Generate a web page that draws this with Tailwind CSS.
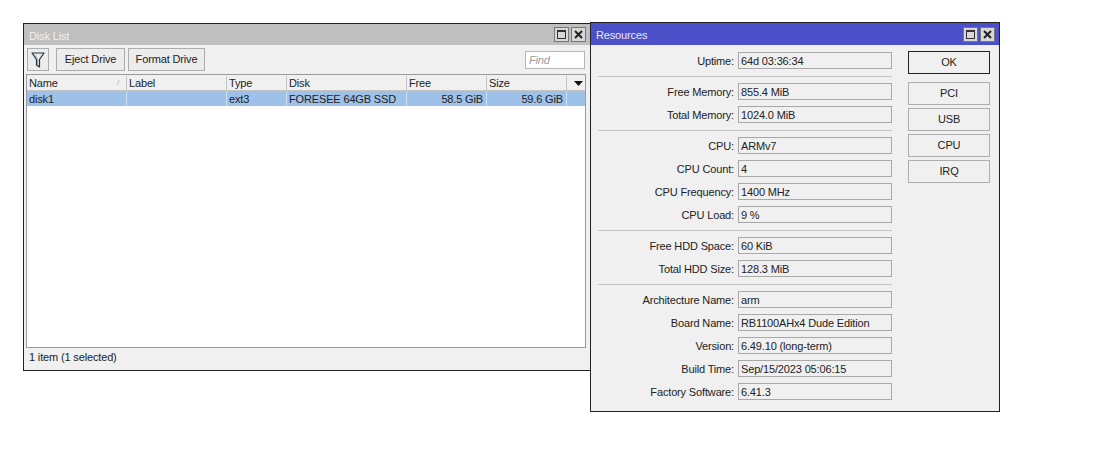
<!DOCTYPE html>
<html lang="en">
<head>
<meta charset="UTF-8">
<title>Disk List / Resources</title>
<script src="https://cdn.jsdelivr.net/npm/@tailwindcss/browser@4"></script>
</head>
<body class="relative w-[1109px] h-[451px] overflow-hidden bg-white font-['Liberation_Sans',sans-serif] text-[11px] tracking-[-0.15px] leading-[14px] text-[#222]">

<!-- Disk List window -->
<div class="absolute left-[23px] top-[23px] w-[568px] h-[348px] border border-[#222] bg-[#f0f0f0] flex flex-col">
  <div class="h-[21px] bg-[#bfbfbf] flex items-center pl-[5px] pr-[3px] text-[#f0f0f0]">
    <span class="flex-1 pt-[2px]">Disk List</span>
    <div class="flex gap-[2px] mr-[1px]">
      <div class="w-[15px] h-[15px] bg-[#d8d8d8] border border-[#777] flex items-center justify-center"><div class="w-[9px] h-[9px] border border-[#333] border-t-2"></div></div>
      <div class="w-[15px] h-[15px] bg-[#d8d8d8] border border-[#777] flex items-center justify-center">
        <svg width="9" height="9" viewBox="0 0 9 9"><path d="M1 1l7 7M8 1l-7 7" stroke="#222" stroke-width="2"/></svg>
      </div>
    </div>
  </div>
  <div class="h-[29px] flex items-center pl-[3px] pr-[5px] gap-[3px]">
    <div class="w-[22px] h-[23px] bg-[#ececec] border border-[#adadad] flex items-center justify-center">
      <svg width="14" height="16" viewBox="0 0 14 16" fill="none"><path d="M1 1h12L8.5 7.5V15L5.5 13V7.5z" stroke="#24303c" stroke-width="1.2" stroke-linejoin="round"/><path d="M3.5 2.5l3.2 5v5" stroke="#7fa6c8" stroke-width="1"/></svg>
    </div>
    <div class="ml-[4px] w-[69px] h-[23px] pb-[2px] bg-[#ececec] border border-[#adadad] flex items-center justify-center">Eject Drive</div>
    <div class="w-[77px] h-[23px] pb-[2px] bg-[#ececec] border border-[#adadad] flex items-center justify-center">Format Drive</div>
    <div class="ml-auto w-[60px] h-[18px] bg-white border border-[#b5b5b5] pl-[3px] italic text-[#9a9a9a] flex items-center">Find</div>
  </div>
  <div class="flex-1 ml-[2px] mr-[4px] border border-[#9a9a9a] bg-white flex flex-col">
    <div class="h-[16px] pt-[1px] flex bg-[#f0f0f0] border-b border-[#c4c4c4]">
      <div class="w-[100px] pl-[2px] border-r border-[#c4c4c4] flex items-center justify-between pr-[7px]">Name<span class="text-[8px] text-[#aaa]">/</span></div>
      <div class="w-[100px] pl-[2px] border-r border-[#c4c4c4] flex items-center">Label</div>
      <div class="w-[60px] pl-[2px] border-r border-[#c4c4c4] flex items-center">Type</div>
      <div class="w-[120px] pl-[2px] border-r border-[#c4c4c4] flex items-center">Disk</div>
      <div class="w-[80px] pl-[2px] border-r border-[#c4c4c4] flex items-center">Free</div>
      <div class="w-[80px] pl-[2px] border-r border-[#c4c4c4] flex items-center">Size</div>
      <div class="flex-1 flex items-center justify-end pr-[2px]">
        <svg width="9" height="5" viewBox="0 0 9 5"><path d="M0 0h9L4.5 5z" fill="#111"/></svg>
      </div>
    </div>
    <div class="h-[15px] flex bg-[#9dc1e8]">
      <div class="w-[100px] pl-[2px] border-r border-[#cfe0f3] flex items-center">disk1</div>
      <div class="w-[100px] pl-[2px] border-r border-[#cfe0f3]"></div>
      <div class="w-[60px] pl-[2px] border-r border-[#cfe0f3] flex items-center">ext3</div>
      <div class="w-[120px] pl-[2px] border-r border-[#cfe0f3] flex items-center whitespace-nowrap">FORESEE 64GB SSD</div>
      <div class="w-[80px] pr-[3px] border-r border-[#cfe0f3] flex items-center justify-end">58.5 GiB</div>
      <div class="w-[80px] pr-[3px] border-r border-[#cfe0f3] flex items-center justify-end">59.6 GiB</div>
    </div>
  </div>
  <div class="h-[22px] pl-[5px] pb-[4px] flex items-center">1 item (1 selected)</div>
</div>

<!-- Resources window -->
<div class="absolute left-[590px] top-[22px] w-[410px] h-[390px] border border-[#222] bg-[#f0f0f0] flex flex-col">
  <div class="h-[22px] bg-[#4c50c8] flex items-center pl-[5px] pr-[4px] text-[#e8e8f8]">
    <span class="flex-1 pt-[2px]">Resources</span>
    <div class="flex gap-[2px]">
      <div class="w-[15px] h-[15px] bg-[#d8d8d8] border border-[#777] flex items-center justify-center"><div class="w-[9px] h-[9px] border border-[#333] border-t-2"></div></div>
      <div class="w-[15px] h-[15px] bg-[#d8d8d8] border border-[#777] flex items-center justify-center">
        <svg width="9" height="9" viewBox="0 0 9 9"><path d="M1 1l7 7M8 1l-7 7" stroke="#222" stroke-width="2"/></svg>
      </div>
    </div>
  </div>
  <div class="flex-1 flex">
    <div class="w-[301px] pl-[7px] pt-[7px] flex flex-col">
      <div class="flex items-center h-[17px]"><span class="w-[136px] text-right">Uptime:</span><div class="ml-[4px] w-[154px] h-[17px] pl-[2px] border border-[#a8a8a8] flex items-center">64d 03:36:34</div></div>
      <div class="h-px bg-[#c4c4c4] mt-[7px] mb-[6px] w-[294px]"></div>
      <div class="flex flex-col gap-[6px]">
        <div class="flex items-center h-[17px]"><span class="w-[136px] text-right">Free Memory:</span><div class="ml-[4px] w-[154px] h-[17px] pl-[2px] border border-[#a8a8a8] flex items-center">855.4 MiB</div></div>
        <div class="flex items-center h-[17px]"><span class="w-[136px] text-right">Total Memory:</span><div class="ml-[4px] w-[154px] h-[17px] pl-[2px] border border-[#a8a8a8] flex items-center">1024.0 MiB</div></div>
      </div>
      <div class="h-px bg-[#c4c4c4] mt-[7px] mb-[6px] w-[294px]"></div>
      <div class="flex flex-col gap-[6px]">
        <div class="flex items-center h-[17px]"><span class="w-[136px] text-right">CPU:</span><div class="ml-[4px] w-[154px] h-[17px] pl-[2px] border border-[#a8a8a8] flex items-center">ARMv7</div></div>
        <div class="flex items-center h-[17px]"><span class="w-[136px] text-right">CPU Count:</span><div class="ml-[4px] w-[154px] h-[17px] pl-[2px] border border-[#a8a8a8] flex items-center">4</div></div>
        <div class="flex items-center h-[17px]"><span class="w-[136px] text-right">CPU Frequency:</span><div class="ml-[4px] w-[154px] h-[17px] pl-[2px] border border-[#a8a8a8] flex items-center">1400 MHz</div></div>
        <div class="flex items-center h-[17px]"><span class="w-[136px] text-right">CPU Load:</span><div class="ml-[4px] w-[154px] h-[17px] pl-[2px] border border-[#a8a8a8] flex items-center">9 %</div></div>
      </div>
      <div class="h-px bg-[#c4c4c4] mt-[7px] mb-[6px] w-[294px]"></div>
      <div class="flex flex-col gap-[6px]">
        <div class="flex items-center h-[17px]"><span class="w-[136px] text-right">Free HDD Space:</span><div class="ml-[4px] w-[154px] h-[17px] pl-[2px] border border-[#a8a8a8] flex items-center">60 KiB</div></div>
        <div class="flex items-center h-[17px]"><span class="w-[136px] text-right">Total HDD Size:</span><div class="ml-[4px] w-[154px] h-[17px] pl-[2px] border border-[#a8a8a8] flex items-center">128.3 MiB</div></div>
      </div>
      <div class="h-px bg-[#c4c4c4] mt-[7px] mb-[6px] w-[294px]"></div>
      <div class="flex flex-col gap-[6px]">
        <div class="flex items-center h-[17px]"><span class="w-[136px] text-right">Architecture Name:</span><div class="ml-[4px] w-[154px] h-[17px] pl-[2px] border border-[#a8a8a8] flex items-center">arm</div></div>
        <div class="flex items-center h-[17px]"><span class="w-[136px] text-right">Board Name:</span><div class="ml-[4px] w-[154px] h-[17px] pl-[2px] border border-[#a8a8a8] flex items-center">RB1100AHx4 Dude Edition</div></div>
        <div class="flex items-center h-[17px]"><span class="w-[136px] text-right">Version:</span><div class="ml-[4px] w-[154px] h-[17px] pl-[2px] border border-[#a8a8a8] flex items-center">6.49.10 (long-term)</div></div>
        <div class="flex items-center h-[17px]"><span class="w-[136px] text-right">Build Time:</span><div class="ml-[4px] w-[154px] h-[17px] pl-[2px] border border-[#a8a8a8] flex items-center">Sep/15/2023 05:06:15</div></div>
        <div class="flex items-center h-[17px]"><span class="w-[136px] text-right">Factory Software:</span><div class="ml-[4px] w-[154px] h-[17px] pl-[2px] border border-[#a8a8a8] flex items-center">6.41.3</div></div>
      </div>
    </div>
    <div class="ml-[16px] pt-[6px] w-[82px] flex flex-col">
      <div class="h-[23px] pb-[1px] border border-[#222] flex items-center justify-center mb-[8px]">OK</div>
      <div class="flex flex-col gap-[3px]">
        <div class="h-[23px] pb-[1px] border border-[#adadad] flex items-center justify-center">PCI</div>
        <div class="h-[23px] pb-[1px] border border-[#adadad] flex items-center justify-center">USB</div>
        <div class="h-[23px] pb-[1px] border border-[#adadad] flex items-center justify-center">CPU</div>
        <div class="h-[23px] pb-[1px] border border-[#adadad] flex items-center justify-center">IRQ</div>
      </div>
    </div>
  </div>
</div>
</body>
</html>
